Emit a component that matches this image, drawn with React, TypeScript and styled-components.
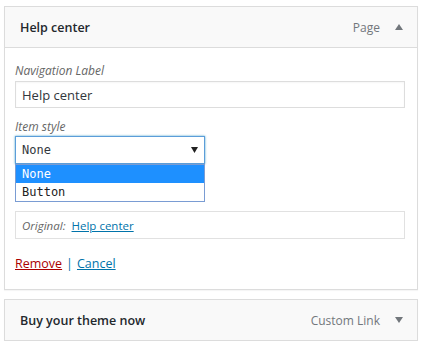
import styled, { createGlobalStyle } from 'styled-components';

const GlobalStyle = createGlobalStyle`
  html, body {
    margin: 0;
    padding: 0;
    background: #fff;
  }
  body {
    font-family: 'Open Sans', 'Noto Sans', sans-serif;
    color: #23282d;
  }
`;

const Page = styled.div`
  padding: 6px 4px 0 4px;
  width: 414px;
`;

const Card = styled.div`
  border: 1px solid #dcdcdc;
  background: #fff;
  box-shadow: 0 1px 1px rgba(0, 0, 0, 0.04);
  & + & {
    margin-top: 9px;
  }
`;

const Header = styled.div<{ $open?: boolean }>`
  display: flex;
  align-items: center;
  height: 40px;
  padding: 0 14px 0 15px;
  background: #f9f9f9;
  border-bottom: ${(p) => (p.$open ? '1px solid #dcdcdc' : 'none')};
`;

const Title = styled.span`
  flex: 1;
  font-size: 12.5px;
  font-weight: 600;
  color: #23282d;
`;

const Kind = styled.span`
  font-size: 12px;
  color: #72777c;
  margin-right: 15px;
`;

const Toggle = styled.svg`
  width: 8px;
  height: 6px;
  fill: #72777c;
`;

const Body = styled.div`
  padding: 14px 12px 16px 10px;
`;

const Field = styled.div`
  margin-bottom: 10px;
`;

const Label = styled.div`
  font-size: 12px;
  font-style: italic;
  color: #666;
  line-height: 18px;
  margin-bottom: 1px;
`;

const TextInput = styled.div`
  height: 25px;
  border: 1px solid #ddd;
  box-shadow: inset 0 1px 2px rgba(0, 0, 0, 0.04);
  display: flex;
  align-items: center;
  padding: 0 6px;
  font-size: 13px;
  color: #32373c;
`;

const SelectWrap = styled.div`
  position: relative;
  width: 190px;
  margin-top: -1px;
`;

const Select = styled.div`
  height: 26px;
  border: 1px solid #5b9dd9;
  box-shadow: 0 0 2px rgba(30, 140, 190, 0.8);
  display: flex;
  align-items: center;
  padding: 0 6px;
  font-family: 'DejaVu Sans Mono', monospace;
  font-size: 12px;
  color: #32373c;
`;

const SelectValue = styled.span`
  flex: 1;
`;

const Caret = styled.svg`
  width: 7px;
  height: 6px;
  fill: #222;
`;

const Dropdown = styled.ul`
  position: absolute;
  left: 0;
  right: 0;
  top: 28px;
  margin: 0;
  padding: 0;
  list-style: none;
  border: 1px solid #7a9cd3;
  background: #fff;
  z-index: 2;
`;

const Option = styled.li<{ $active?: boolean }>`
  height: 18px;
  line-height: 18px;
  padding: 0 6px;
  font-family: 'DejaVu Sans Mono', monospace;
  font-size: 12px;
  background: ${(p) => (p.$active ? '#1e90ff' : '#fff')};
  color: ${(p) => (p.$active ? '#fff' : '#222')};
`;

const Original = styled.div`
  margin-top: 47px;
  height: 26px;
  border: 1px solid #e1e1e1;
  display: flex;
  align-items: center;
  padding: 0 6px;
  font-size: 11.5px;
  color: #666;
`;

const OriginalLabel = styled.span`
  font-style: italic;
  margin-right: 6px;
`;

const Link = styled.a<{ $danger?: boolean }>`
  color: ${(p) => (p.$danger ? '#a00' : '#0073aa')};
  text-decoration: underline;
  cursor: pointer;
`;

const Actions = styled.div`
  margin-top: 16px;
  font-size: 12.5px;
  line-height: 18px;
  color: #0073aa;
`;

const Sep = styled.span`
  margin: 0 4px;
`;

const Up = () => (
  <Toggle viewBox="0 0 8 6">
    <polygon points="0,6 4,0 8,6" />
  </Toggle>
);

const Down = () => (
  <Toggle viewBox="0 0 8 6">
    <polygon points="0,0 8,0 4,6" />
  </Toggle>
);

export default function App() {
  return (
    <>
      <GlobalStyle />
      <Page>
        <Card>
          <Header $open>
            <Title>Help center</Title>
            <Kind>Page</Kind>
            <Up />
          </Header>
          <Body>
            <Field>
              <Label>Navigation Label</Label>
              <TextInput>Help center</TextInput>
            </Field>
            <Field>
              <Label>Item style</Label>
              <SelectWrap>
                <Select>
                  <SelectValue>None</SelectValue>
                  <Caret viewBox="0 0 7 6">
                    <polygon points="0,0 7,0 3.5,6" />
                  </Caret>
                </Select>
                <Dropdown>
                  <Option $active>None</Option>
                  <Option>Button</Option>
                </Dropdown>
              </SelectWrap>
            </Field>
            <Original>
              <OriginalLabel>Original:</OriginalLabel>
              <Link>Help center</Link>
            </Original>
            <Actions>
              <Link $danger>Remove</Link>
              <Sep>|</Sep>
              <Link>Cancel</Link>
            </Actions>
          </Body>
        </Card>
        <Card>
          <Header>
            <Title>Buy your theme now</Title>
            <Kind>Custom Link</Kind>
            <Down />
          </Header>
        </Card>
      </Page>
    </>
  );
}
